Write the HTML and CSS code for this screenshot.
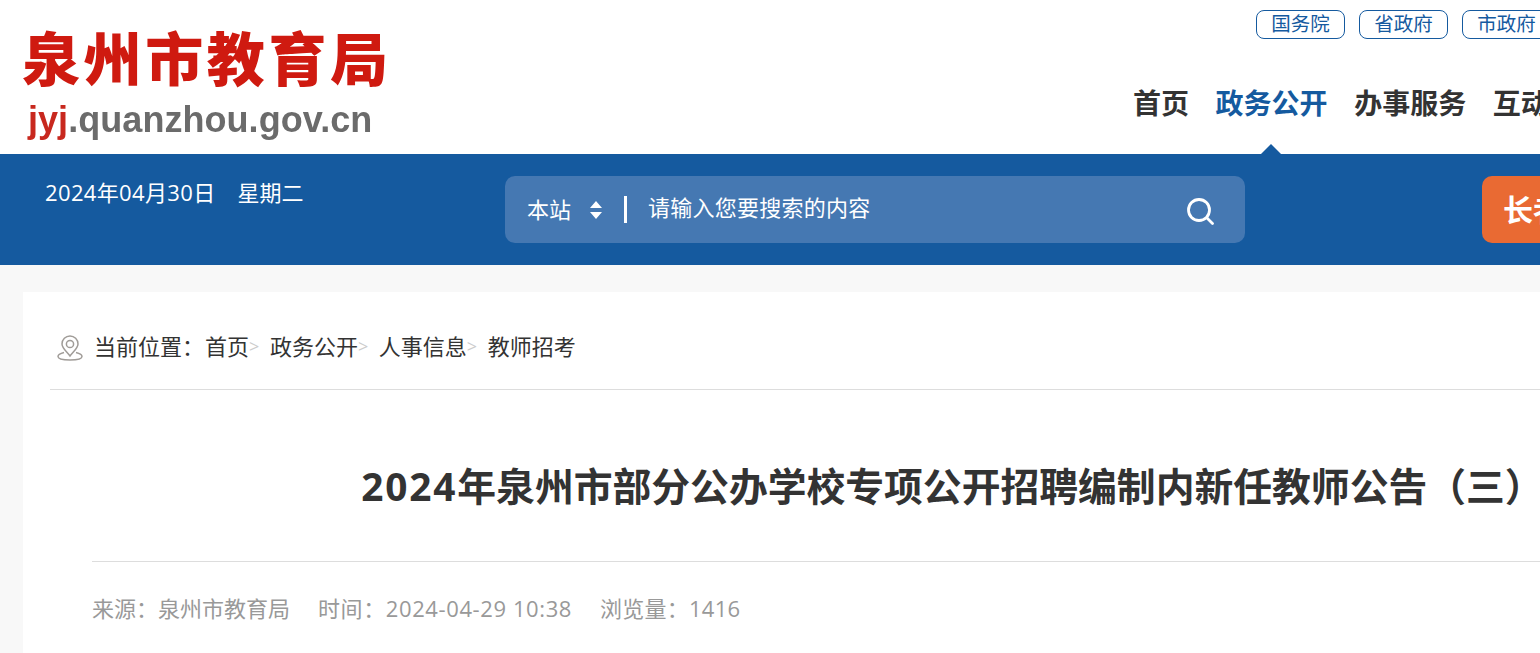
FILE: index.html
```html
<!DOCTYPE html>
<html lang="zh-CN">
<head>
  <meta charset="UTF-8">
  <title>2024年泉州市部分公办学校专项公开招聘编制内新任教师公告（三）</title>
  <link rel="stylesheet" href="styles.css">
</head>
<body>
  <div class="page">
    <header class="header">
      <a class="logo">
        <span class="logo-name">泉州市教育局</span>
        <span class="logo-url"><em>jyj</em>.quanzhou.gov.cn</span>
      </a>
      <div class="header-right">
        <div class="top-links">
          <a>国务院</a>
          <a>省政府</a>
          <a>市政府</a>
        </div>
        <nav class="nav">
          <a>首页</a>
          <a class="active">政务公开</a>
          <a>办事服务</a>
          <a>互动交流</a>
        </nav>
      </div>
    </header>

    <div class="band">
      <div class="date">2024年04月30日<span class="week">星期二</span></div>
      <form class="search">
        <span class="scope">本站</span>
        <svg class="updown" width="14" height="20" viewBox="0 0 14 20">
          <path d="M7 1 L13 8 H1 Z M1 12 H13 L7 19 Z" fill="#fff"/>
        </svg>
        <span class="divider"></span>
        <span class="placeholder">请输入您要搜索的内容</span>
        <svg class="search-icon" width="27" height="27" viewBox="0 0 27 27" fill="none" stroke="#fff" stroke-width="2.8">
          <circle cx="12" cy="12" r="10.5"/>
          <path d="M20 20 L25.5 25.5" stroke-linecap="round"/>
        </svg>
      </form>
      <a class="hotline">长者专线</a>
    </div>

    <main class="main">
      <div class="card">
        <div class="crumbs">
          <svg class="pin" width="26" height="26" viewBox="0 0 26 26" fill="none" stroke="#a09c98" stroke-width="1.5">
            <path d="M13 21 C9 16 5 13 5 9 A8 8 0 0 1 21 9 C21 13 17 16 13 21 Z"/>
            <circle cx="13" cy="9" r="3.6"/>
            <path d="M7 17.5 C3 18.5 1 20 1 21.5 C1 24 7 25 13 25 C19 25 25 24 25 21.5 C25 20 23 18.5 19 17.5"/>
          </svg>
          <span class="here">当前位置：</span>
          <a>首页</a><i>&gt;</i>
          <a>政务公开</a><i>&gt;</i>
          <a>人事信息</a><i>&gt;</i>
          <a>教师招考</a>
        </div>
        <article class="article">
          <h1><span class="year">2024</span>年泉州市部分公办学校专项公开招聘编制内新任教师公告（三）</h1>
          <div class="meta">
            <span>来源：泉州市教育局</span>
            <span class="time">时间：2024-04-29 10:38</span>
            <span class="views">浏览量：1416</span>
          </div>
        </article>
      </div>
    </main>
  </div>
</body>
</html>
```

FILE: styles.css
```css
html, body {
  margin: 0;
  padding: 0;
  height: 653px;
  overflow: hidden;
}
body {
  font-family: "Open Sans", "Noto Sans CJK SC", sans-serif;
  color: #333;
  background: #f8f8f8;
}
a {
  color: inherit;
  text-decoration: none;
}
.page {
  width: 1920px;
}

/* header */
.header {
  display: flex;
  height: 154px;
  background: #fff;
}
.logo {
  display: block;
  width: 1133px;
  flex: none;
  padding: 22px 0 0 22px;
  box-sizing: border-box;
  filter: blur(0.4px);
}
.logo-name {
  display: block;
  height: 74px;
  font-size: 58px;
  line-height: 74px;
  font-weight: 900;
  letter-spacing: 3.6px;
  color: #cf1a10;
  white-space: nowrap;
}
.logo-url {
  display: block;
  margin: 0 0 0 6px;
  font-family: "Liberation Sans", sans-serif;
  font-size: 36px;
  line-height: 47px;
  font-weight: bold;
  letter-spacing: 0.05px;
  color: #6b6b6b;
}
.logo-url em {
  font-style: normal;
  color: #c8281e;
}
.header-right {
  flex: 1;
}
.top-links {
  display: flex;
  gap: 14px;
  margin: 10px 0 0 123px;
}
.top-links a {
  width: 87px;
  height: 27px;
  border: 1px solid #155a9f;
  border-radius: 8px;
  font-size: 19.5px;
  line-height: 26px;
  text-align: center;
  color: #155a9f;
}
.nav {
  display: flex;
  gap: 26.6px;
  margin-top: 43px;
}
.nav a {
  position: relative;
  font-size: 28px;
  line-height: 42px;
  font-weight: bold;
  color: #333;
}
.nav a.active {
  color: #155a9f;
}
.nav a.active::after {
  content: "";
  position: absolute;
  left: 44px;
  top: 62px;
  border: 11px solid transparent;
  border-top: 0;
  border-bottom-color: #155a9f;
}

/* blue band */
.band {
  display: flex;
  align-items: flex-start;
  height: 111px;
  background: #155a9f;
}
.date {
  width: 505px;
  flex: none;
  box-sizing: border-box;
  padding: 23px 0 0 45px;
  font-size: 22px;
  line-height: 30px;
  letter-spacing: 0.36px;
  color: #fff;
}
.week {
  margin-left: 22px;
  letter-spacing: 0;
}
.search {
  display: flex;
  align-items: center;
  width: 740px;
  height: 67px;
  margin: 22px 237px 0 0;
  padding: 0 31px 0 22px;
  box-sizing: border-box;
  border-radius: 10px;
  background: #4578b2;
  color: #fff;
  font-size: 22px;
}
.scope {
  position: relative;
  top: -2px;
}
.updown {
  margin-left: 18px;
}
.divider {
  width: 3px;
  height: 27px;
  margin: 0 21px 0 21px;
  background: #fff;
}
.placeholder {
  flex: 1;
  position: relative;
  top: -4px;
  letter-spacing: 0.25px;
}
.search-icon {
  margin-top: 4px;
}
.hotline {
  width: 200px;
  height: 67px;
  margin-top: 22px;
  padding-left: 21px;
  box-sizing: border-box;
  border-radius: 10px;
  background: #e96a33;
  color: #fff;
  font-size: 30px;
  font-weight: bold;
  line-height: 67px;
}

/* content card */
.main {
  padding: 27px 0 0 23px;
}
.card {
  width: 1840px;
  height: 400px;
  padding: 0 0 0 27px;
  box-sizing: border-box;
  background: #fff;
}
.crumbs {
  display: flex;
  align-items: center;
  height: 89px;
  padding: 8px 0 0 7px;
  border-bottom: 1px solid #ddd;
  font-size: 22px;
  color: #333;
}
.pin {
  margin: 7px 11px 0 0;
}
.here {
  margin-right: 1px;
}
.crumbs i {
  margin: 2px 10.6px 0 0;
  font-style: normal;
  font-size: 18px;
  color: #ccc;
}
.article {
  width: 1721px;
  margin-left: 42px;
}
.article h1 {
  margin: 0;
  height: 172px;
  box-sizing: border-box;
  padding-top: 69px;
  border-bottom: 1px solid #ddd;
  font-size: 38.8px;
  line-height: 54px;
  font-weight: bold;
  text-align: center;
  color: #333;
}
.year {
  letter-spacing: 1.8px;
}
.meta {
  display: flex;
  gap: 28px;
  margin-top: 30px;
  font-size: 22px;
  line-height: 33px;
  color: #999;
}
.time {
  letter-spacing: 0.6px;
}
.views {
  letter-spacing: 0.25px;
}
```
